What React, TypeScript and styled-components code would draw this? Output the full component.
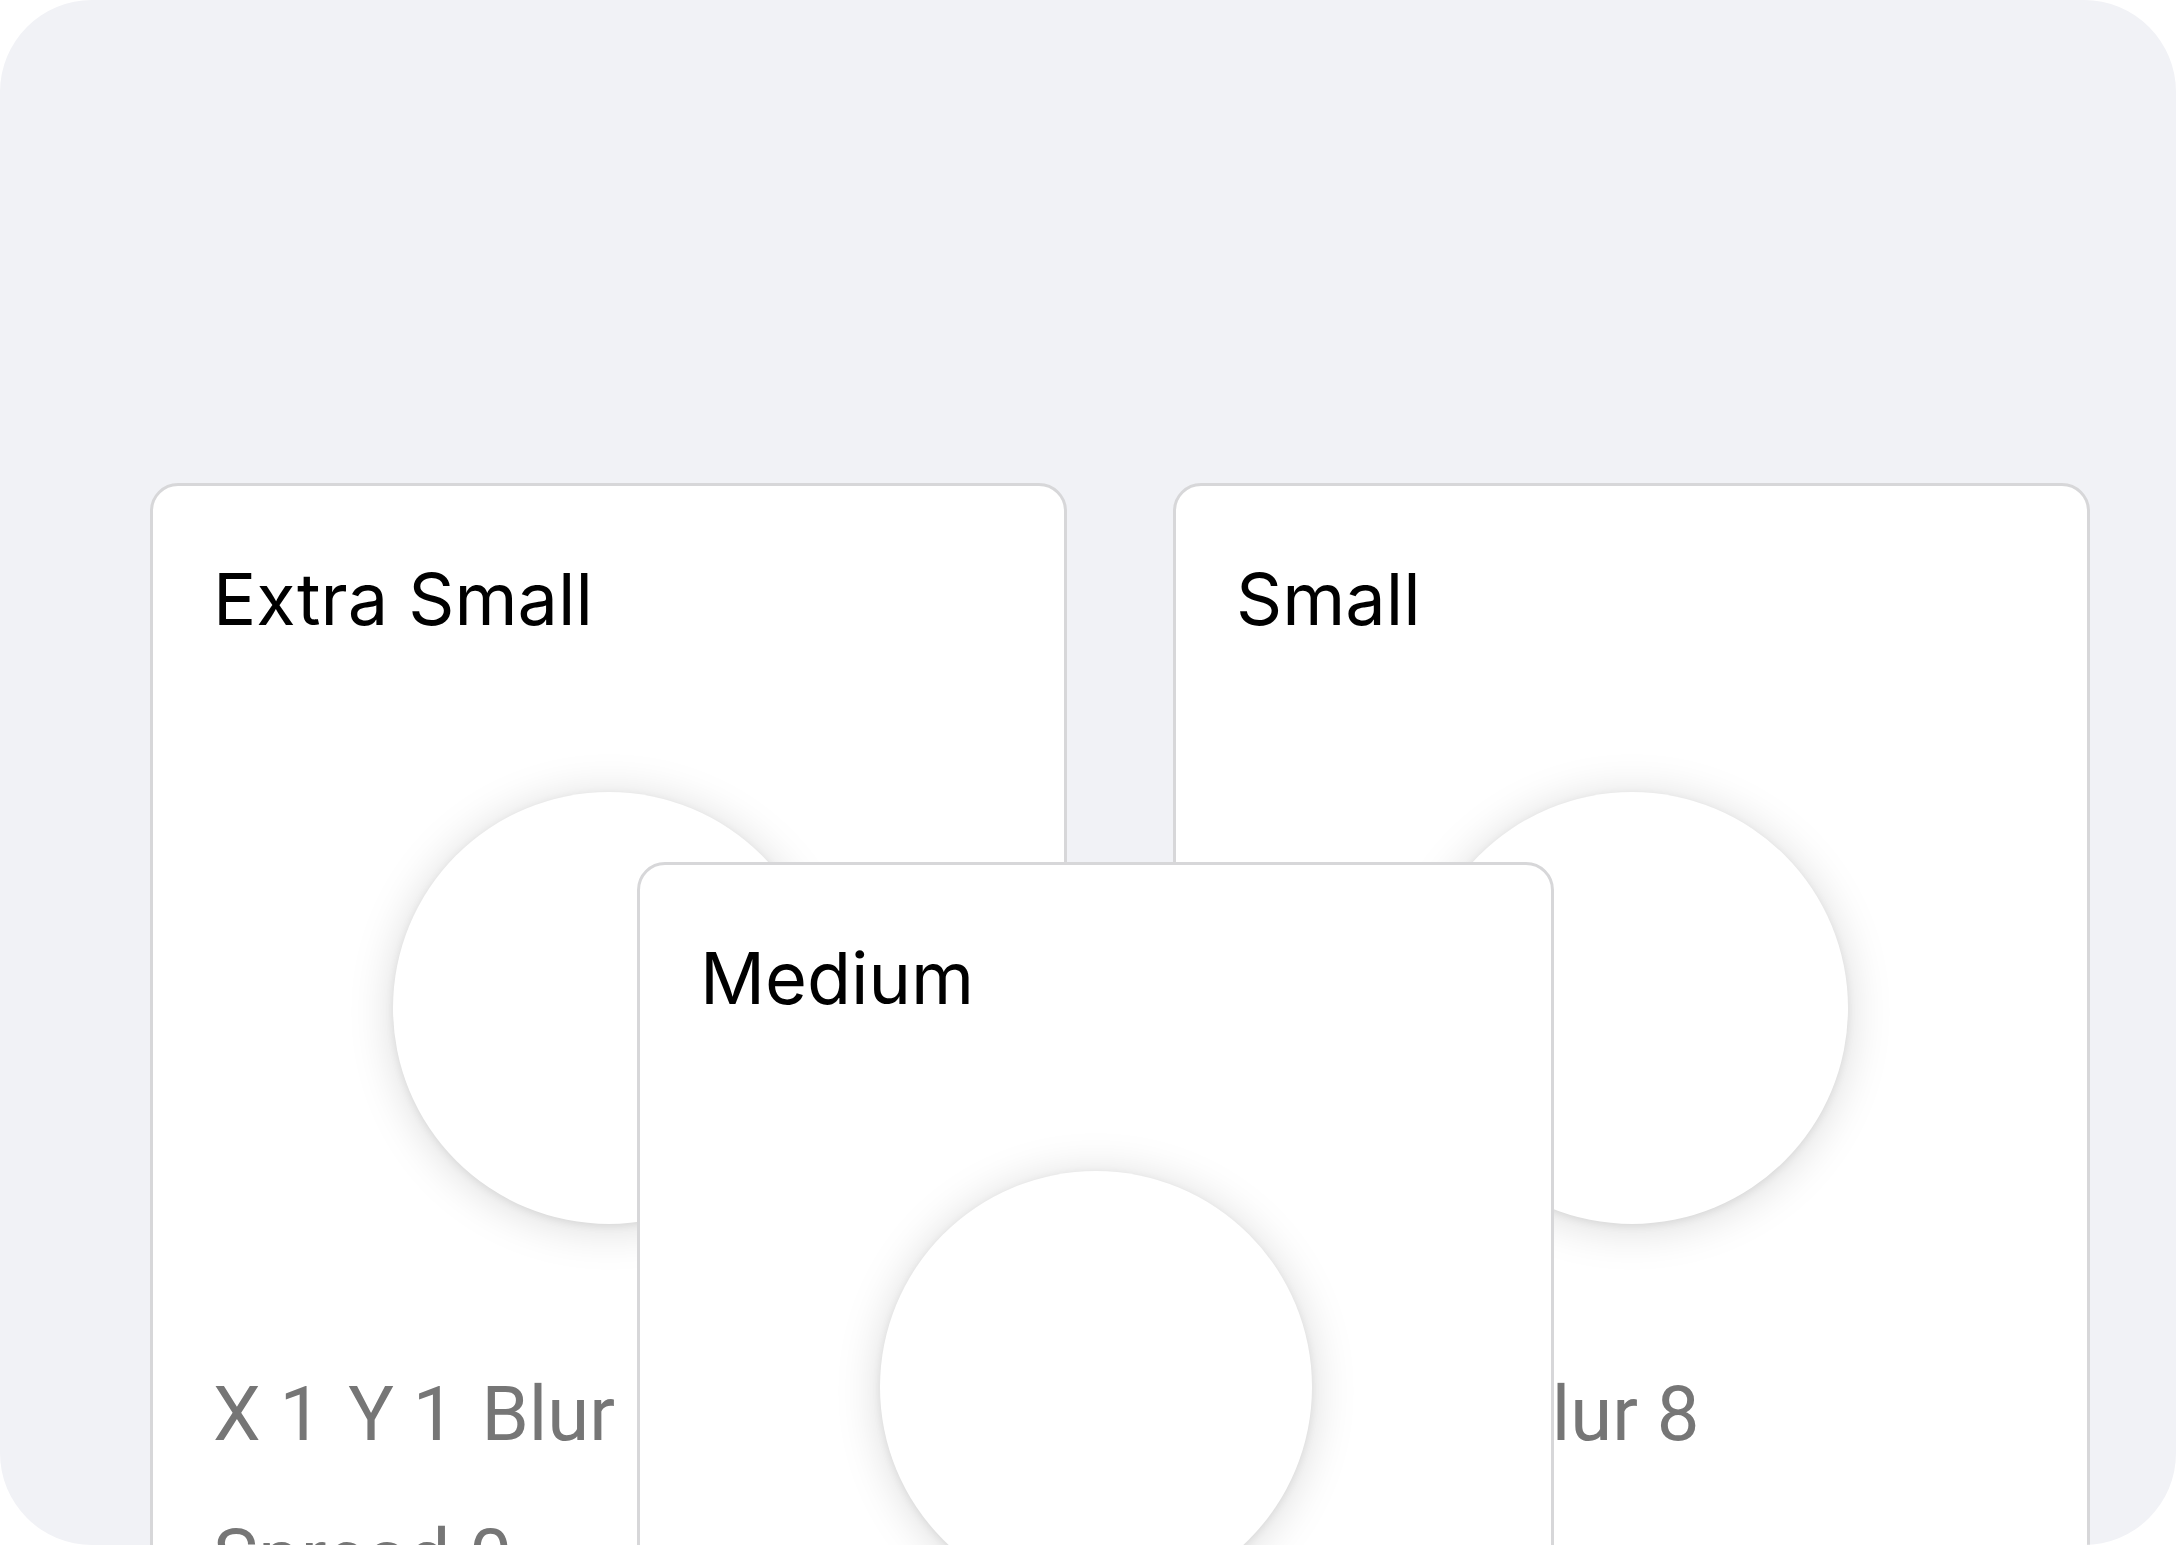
import styled, { createGlobalStyle } from "styled-components";

const GlobalStyle = createGlobalStyle`
  html, body {
    margin: 0;
    padding: 0;
    background: #ffffff;
  }
  body {
    font-family: Inter, "Noto Sans", sans-serif;
  }
`;

const Board = styled.main`
  position: relative;
  width: 100vw;
  height: 100vh;
  box-sizing: border-box;
  background-color: #f1f2f6;
  border-radius: 92px;
  overflow: hidden;
  padding: 483px 0 0 150px;
`;

const Row = styled.div`
  display: grid;
  grid-template-columns: 917px 917px;
  column-gap: 106px;
  align-items: start;
`;

const Card = styled.section<{ $floating?: boolean }>`
  box-sizing: border-box;
  width: 917px;
  background: #ffffff;
  border: 3px solid #d7d7d9;
  border-radius: 28px;
  padding: 70px 60px 80px;
  display: flex;
  flex-direction: column;
  ${(p) =>
    p.$floating &&
    `
    position: absolute;
    left: 637px;
    top: 862px;
  `}
`;

const Title = styled.h2`
  margin: 0;
  font-family: Inter, "Noto Sans", sans-serif;
  font-size: 72px;
  line-height: 1.2;
  font-weight: 400;
  color: #000000;
`;

const Disc = styled.div`
  width: 432px;
  height: 432px;
  border-radius: 50%;
  background: #ffffff;
  align-self: center;
  margin-top: 150px;
  box-shadow: 0 2px 8px rgba(0, 0, 0, 0.08), 0 4px 46px rgba(0, 0, 0, 0.15);
`;

const Specs = styled.div`
  display: flex;
  flex-direction: column;
  row-gap: 51px;
  margin-top: 145px;
`;

const SpecLine = styled.div`
  display: flex;
  column-gap: 26px;
`;

const Spec = styled.span`
  font-family: Roboto, "Liberation Sans", sans-serif;
  font-size: 76px;
  line-height: 1.2;
  color: #767676;
  white-space: nowrap;
`;

type Shadow = { title: string; x: number; y: number; blur: number; spread: number };

const shadows: Shadow[] = [
  { title: "Extra Small", x: 1, y: 1, blur: 3, spread: 0 },
  { title: "Small", x: 1, y: 2, blur: 8, spread: 0 },
  { title: "Medium", x: 1, y: 4, blur: 16, spread: 0 },
];

const ShadowCard = ({ s, floating }: { s: Shadow; floating?: boolean }) => (
  <Card $floating={floating}>
    <Title>{s.title}</Title>
    <Disc />
    <Specs>
      <SpecLine>
        <Spec>X {s.x}</Spec>
        <Spec>Y {s.y}</Spec>
        <Spec>Blur {s.blur}</Spec>
      </SpecLine>
      <SpecLine>
        <Spec>Spread {s.spread}</Spec>
      </SpecLine>
    </Specs>
  </Card>
);

export default function App() {
  return (
    <>
      <GlobalStyle />
      <Board>
        <Row>
          <ShadowCard s={shadows[0]} />
          <ShadowCard s={shadows[1]} />
        </Row>
        <ShadowCard s={shadows[2]} floating />
      </Board>
    </>
  );
}
